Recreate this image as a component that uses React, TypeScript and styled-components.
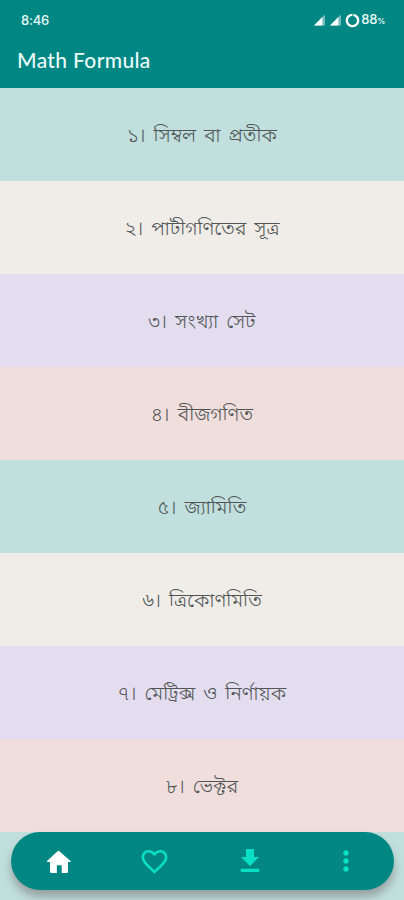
import React from "react";
import styled, { createGlobalStyle } from "styled-components";

const GlobalStyle = createGlobalStyle`
  * { box-sizing: border-box; }
  body { margin: 0; overflow: hidden; }
`;

const Screen = styled.main`
  position: relative;
  display: flex;
  flex-direction: column;
  width: 404px;
  height: 900px;
  overflow: hidden;
  background: #c0dfdd;
  font-family: "Noto Sans", "Noto Sans Bengali", sans-serif;
`;

const Header = styled.header`
  flex: none;
  height: 88px;
  background: #008784;
  color: #eafaf8;
`;

const StatusBar = styled.div`
  display: flex;
  align-items: center;
  justify-content: space-between;
  height: 40px;
  padding: 0 19px 0 21px;
  font: 500 13px/40px Inter, sans-serif;
  letter-spacing: -0.2px;
`;

const StatusIcons = styled.div`
  display: flex;
  align-items: center;
  svg { display: block; }
  svg:last-of-type { margin-right: 1px; }
`;

const Percent = styled.small`
  font-size: 8px;
  font-weight: 600;
`;

const Title = styled.h1`
  margin: 0;
  padding-left: 17px;
  font: 500 21px/40px Lato, sans-serif;
  letter-spacing: 0.35px;
`;

const List = styled.ul`
  flex: none;
  margin: 0;
  padding: 0;
  list-style: none;
`;

const Row = styled.li<{ $color: string }>`
  display: flex;
  align-items: center;
  justify-content: center;
  height: 93px;
  background: ${(p) => p.$color};
  color: #505656;
  font-size: 19.8px;
  font-weight: 300;
  line-height: 30px;
  word-spacing: 2.8px;
  white-space: nowrap;
`;

const BottomNav = styled.nav`
  position: absolute;
  left: 11px;
  right: 10px;
  bottom: 10px;
  display: grid;
  grid-template-columns: repeat(4, 1fr);
  height: 58px;
  border-radius: 29px;
  background: #008784;
  box-shadow: 0 7px 9px rgba(110, 105, 105, 0.5);
`;

const NavButton = styled.button<{ $active?: boolean }>`
  display: flex;
  align-items: center;
  justify-content: center;
  padding: 0;
  border: 0;
  background: none;
  color: ${(p) => (p.$active ? "#ffffff" : "#08dfc4")};
`;

const rows = [
  { text: "১। সিম্বল বা প্রতীক", color: "#c0dfdd" },
  { text: "২। পাটীগণিতের সূত্র", color: "#f0ede8" },
  { text: "৩। সংখ্যা সেট", color: "#e4ddf0" },
  { text: "৪। বীজগণিত", color: "#f0dedd" },
  { text: "৫। জ্যামিতি", color: "#c0dfdd" },
  { text: "৬। ত্রিকোণমিতি", color: "#f0ede8" },
  { text: "৭। মেট্রিক্স ও নির্ণায়ক", color: "#e4ddf0" },
  { text: "৮। ভেক্টর", color: "#f0dedd" },
];

const SignalIcon = () => (
  <svg width="16" height="12" viewBox="0 0 16 12">
    <path d="M1 11.5 12 .5v11z" fill="#fff" fillOpacity=".45" />
    <path d="M1 11.5 9.4 3.1v8.4z" fill="#fff" />
  </svg>
);

const BatteryIcon = () => (
  <svg width="15" height="15" viewBox="0 0 15 15">
    <circle cx="7.5" cy="7.5" r="5.7" fill="none" stroke="#fff" strokeWidth="2.3" strokeDasharray="33.8 2" transform="rotate(-80 7.5 7.5)" />
  </svg>
);

const HomeIcon = () => (
  <svg width="27" height="27" viewBox="0 0 28 28" fill="currentColor">
    <path d="M13 3.4q1-.9 2 0l11.4 10.2q.7.9-.5.9h-2.1v10q0 1.5-1.5 1.5h-5v-8.2h-5V26H6.7q-1.5 0-1.5-1.5v-10H2.6q-1.2 0-.5-.9z" />
  </svg>
);

const HeartIcon = () => (
  <svg width="31" height="31" viewBox="0 0 24 24" fill="currentColor">
    <path d="M16.5 3c-1.74 0-3.41.81-4.5 2.09C10.91 3.81 9.24 3 7.5 3 4.42 3 2 5.42 2 8.5c0 3.78 3.4 6.86 8.55 11.54L12 21.35l1.45-1.32C18.6 15.36 22 12.28 22 8.5 22 5.42 19.58 3 16.5 3zm-4.4 15.55-.1.1-.1-.1C7.14 14.24 4 11.39 4 8.5 4 6.5 5.5 5 7.5 5c1.54 0 3.04.99 3.57 2.36h1.87C13.46 5.99 14.96 5 16.5 5c2 0 3.5 1.5 3.5 3.5 0 2.89-3.14 5.74-7.9 10.05z" />
  </svg>
);

const DownloadIcon = () => (
  <svg width="32" height="32" viewBox="0 0 24 24" fill="currentColor">
    <path d="M18.8 9H15V3H9v6H5.2l6.8 6.8z" />
    <rect x="4.9" y="17.9" width="14.2" height="2.3" rx=".8" />
  </svg>
);

const MoreIcon = () => (
  <svg width="32" height="32" viewBox="0 0 24 24" fill="currentColor">
    <circle cx="12" cy="6" r="2" />
    <circle cx="12" cy="12" r="2" />
    <circle cx="12" cy="18" r="2" />
  </svg>
);

export default function App() {
  return (
    <Screen>
      <GlobalStyle />
      <Header>
        <StatusBar>
          <span>8:46</span>
          <StatusIcons>
            <SignalIcon />
            <SignalIcon />
            <BatteryIcon />
            <span>88<Percent>%</Percent></span>
          </StatusIcons>
        </StatusBar>
        <Title>Math Formula</Title>
      </Header>
      <List>
        {rows.map((row) => (
          <Row key={row.text} $color={row.color}>{row.text}</Row>
        ))}
      </List>
      <BottomNav>
        <NavButton $active aria-label="Home"><HomeIcon /></NavButton>
        <NavButton aria-label="Favourites"><HeartIcon /></NavButton>
        <NavButton aria-label="Downloads"><DownloadIcon /></NavButton>
        <NavButton aria-label="More"><MoreIcon /></NavButton>
      </BottomNav>
    </Screen>
  );
}
